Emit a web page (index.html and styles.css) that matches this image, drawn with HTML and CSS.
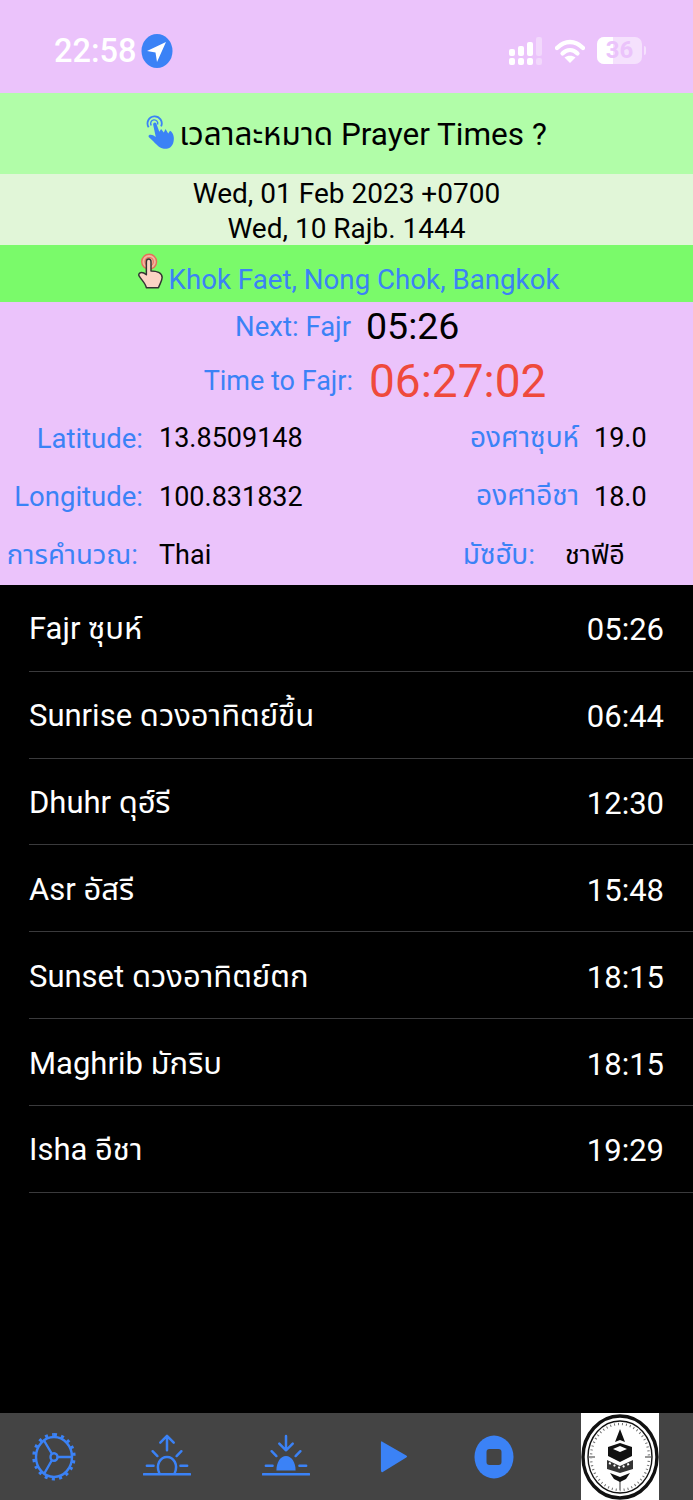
FILE: index.html
```html
<!DOCTYPE html>
<html lang="en">
<head>
    <meta charset="UTF-8">
    <meta name="viewport" content="width=device-width, initial-scale=1.0">
    <title>Prayer Times</title>
    <link rel="stylesheet" href="styles.css">
</head>
<body>
    <div class="status-bar">
        <div class="status-left">
            <span class="clock">22:58</span>
            <svg class="location-icon" width="32" height="34" viewBox="0 0 32 34">
                <ellipse cx="16" cy="17" rx="15.5" ry="17" fill="#3b82f6"/>
                <path d="M25 8 L6 17 L14.5 18.5 L16 28 Z" fill="#fff"/>
            </svg>
        </div>
        <div class="status-right">
            <svg width="36" height="30" viewBox="0 0 36 30">
                <g fill="#fff">
                    <rect x="1" y="13" width="6" height="7" rx="2"/>
                    <rect x="10" y="10" width="6" height="10" rx="2"/>
                    <rect x="19" y="6" width="6" height="14" rx="2"/>
                    <rect x="1" y="22" width="6" height="7" rx="2"/>
                    <rect x="10" y="22" width="6" height="7" rx="2"/>
                    <rect x="19" y="22" width="6" height="7" rx="2"/>
                </g>
                <g fill="#fff" opacity="0.35">
                    <rect x="28" y="1" width="6" height="19" rx="2"/>
                    <rect x="28" y="22" width="6" height="7" rx="2"/>
                </g>
            </svg>
            <svg class="wifi" width="30" height="26" viewBox="0 0 30 26">
                <path d="M2 10 C10 2 20 2 28 10" fill="none" stroke="#fff" stroke-width="4.4" stroke-linecap="round"/>
                <path d="M7.5 15.5 C12 11 18 11 22.5 15.5" fill="none" stroke="#fff" stroke-width="4.2" stroke-linecap="round"/>
                <path d="M15 25 L9.5 19.5 C12.5 17 17.5 17 20.5 19.5 Z" fill="#fff"/>
            </svg>
            <div class="battery">
                <div class="battery-fill"></div>
                <span class="battery-num">36</span>
            </div>
            <div class="battery-cap"></div>
        </div>
    </div>

    <div class="title-bar">
        <svg width="32" height="37" viewBox="0 0 36 38">
            <path d="M3 12 A8 8 0 1 1 17 11" fill="none" stroke="#3b82f6" stroke-width="2"/>
            <path d="M6 10 A4 4 0 1 1 13 9" fill="none" stroke="#3b82f6" stroke-width="1.6"/>
            <path d="M8 9 C8 6 12 6 12 9 L15 17 L17 14 L20 18 L22 14 L25 19 L27 16 C31 18 32 24 31 28 C30 35 24 37 19 36 C14 35 11 30 3 23 C2 20 6 20 8 21 L11 23 Z" fill="#3b82f6"/>
        </svg>
        <span>เวลาละหมาด Prayer Times ?</span>
    </div>

    <div class="date-bar">
        <div>Wed, 01 Feb 2023 +0700</div>
        <div>Wed, 10 Rajb. 1444</div>
    </div>

    <div class="place-bar">
        <svg width="26" height="40" viewBox="0 0 28 40">
            <circle cx="12" cy="10" r="8" fill="#f2b5a0" stroke="#e5705a" stroke-width="1.5"/>
            <circle cx="12" cy="10" r="4.5" fill="none" stroke="#e5705a" stroke-width="1.2"/>
            <path d="M9 10 C9 6 14 6 14 10 L14 20 C20 20 26 22 26 27 C26 30 24 33 22 38 L9 38 C8 33 4 30 1 25 C0 22 4 20 9 24 Z" fill="#fad3c4" stroke="#333" stroke-width="1.6" stroke-linejoin="round"/>
        </svg>
        <span>Khok Faet, Nong Chok, Bangkok</span>
    </div>

    <div class="info">
        <div class="next-row">
            <span class="label next-label">Next: Fajr</span>
            <span class="next-time">05:26</span>
        </div>
        <div class="next-row countdown-row">
            <span class="label next-label">Time to Fajr:</span>
            <span class="countdown">06:27:02</span>
        </div>
        <div class="info-row">
            <span class="label col-label">Latitude:</span>
            <span class="col-value">13.8509148</span>
            <span class="label col-label2">องศาซุบห์</span>
            <span class="col-value2">19.0</span>
        </div>
        <div class="info-row">
            <span class="label col-label">Longitude:</span>
            <span class="col-value">100.831832</span>
            <span class="label col-label2">องศาอีชา</span>
            <span class="col-value2">18.0</span>
        </div>
        <div class="info-row">
            <span class="label col-label method">การคำนวณ:</span>
            <span class="col-value">Thai</span>
            <span class="label col-label2 madhab">มัซฮับ:</span>
            <span class="col-value2 madhab-value">ชาฟีอี</span>
        </div>
    </div>

    <div class="times">
        <div class="time-row"><span>Fajr ซุบห์</span><span>05:26</span></div>
        <div class="time-row"><span>Sunrise ดวงอาทิตย์ขึ้น</span><span>06:44</span></div>
        <div class="time-row"><span>Dhuhr ดุฮ์รี</span><span>12:30</span></div>
        <div class="time-row"><span>Asr อัสรี</span><span>15:48</span></div>
        <div class="time-row"><span>Sunset ดวงอาทิตย์ตก</span><span>18:15</span></div>
        <div class="time-row"><span>Maghrib มักริบ</span><span>18:15</span></div>
        <div class="time-row"><span>Isha อีชา</span><span>19:29</span></div>
    </div>

    <div class="tab-bar">
        <svg class="tab" width="44" height="48" viewBox="0 0 44 48">
            <g fill="none" stroke="#3b82f6" stroke-width="2.4">
                <ellipse cx="22" cy="24" rx="18" ry="20"/>
                <ellipse cx="22" cy="24" rx="3.5" ry="3.8"/>
                <path d="M25.5 24 H40 M20 21 L12 7.5 M20 27 L12 41"/>
                <path stroke-width="3.4" stroke-dasharray="3 4.2" d="M22 1.8 A20 22 0 1 1 21.9 1.8"/>
            </g>
        </svg>
        <svg class="tab" width="48" height="48" viewBox="0 0 50 48">
            <g fill="none" stroke="#3b82f6" stroke-width="2.6" stroke-linecap="round" stroke-linejoin="round">
                <path d="M25 17 V2 M18 9 L25 2 L32 9"/>
                <path d="M10 18 L15 23 M40 18 L35 23 M4 33 H11 M39 33 H46"/>
                <path d="M17 41 C13 32 18 24 25 24 C32 24 37 32 33 41"/>
                <path d="M1 42 H49"/>
            </g>
        </svg>
        <svg class="tab" width="48" height="48" viewBox="0 0 50 48">
            <g fill="none" stroke="#3b82f6" stroke-width="2.6" stroke-linecap="round" stroke-linejoin="round">
                <path d="M25 2 V17 M18 10 L25 17 L32 10"/>
                <path d="M10 18 L15 23 M40 18 L35 23 M4 33 H11 M39 33 H46"/>
                <path d="M1 42 H49"/>
            </g>
            <path d="M15 38 C15 30 19 23 25 23 C31 23 35 30 35 38 Z" fill="#3b82f6"/>
        </svg>
        <svg class="tab" width="29" height="37" viewBox="0 0 32 38">
            <path d="M3 3 L29 18 Q31 19 29 20 L3 36 Q1 37 1 34 V4 Q1 1 3 3 Z" fill="#3b82f6"/>
        </svg>
        <svg class="tab" width="40" height="44" viewBox="0 0 40 44">
            <ellipse cx="20" cy="22" rx="19.5" ry="21.5" fill="#3b82f6"/>
            <rect x="12.5" y="14" width="15" height="16" rx="3" fill="#444"/>
        </svg>
        <div class="logo">
            <svg width="78" height="87" viewBox="0 0 78 87">
                <g fill="none" stroke="#111">
                    <ellipse cx="39" cy="44" rx="37" ry="41" stroke-width="3.4"/>
                    <ellipse cx="39" cy="44" rx="32" ry="36" stroke-width="1.4"/>
                    <ellipse cx="39" cy="44" rx="29" ry="33" stroke-width="2.4" stroke-dasharray="1 3" stroke-opacity="0.6"/>
                    <path d="M39 66 V77 M8 44 H14 M64 44 H70" stroke="#999" stroke-width="2"/>
                </g>
                <path d="M39 16 L44 29 L39 27 L34 29 Z" fill="#111"/>
                <path d="M27 34 L39 30 L51 34 L51 43 L39 49 L27 43 Z" fill="#111"/>
                <path d="M39 33 L46 36 L39 39 L32 36 Z" fill="#fff"/>
                <path d="M26 47 L39 53 L52 47 V56 L39 60 L26 56 Z" fill="#111" opacity="0.85"/>
                <path d="M28 50 L39 55 L50 50" fill="none" stroke="#fff" stroke-width="2" stroke-dasharray="2 3"/>
                <path d="M29 60 L39 64 L49 60 L45 66 L39 69 L33 66 Z" fill="#111"/>
            </svg>
        </div>
    </div>
</body>
</html>
```

FILE: styles.css
```css
body {
    font-family: Roboto, "Noto Sans", "Noto Sans Thai", "Liberation Sans", sans-serif;
    margin: 0;
    padding: 0;
    width: 693px;
    height: 1500px;
    display: flex;
    flex-direction: column;
    background-color: #000;
    overflow: hidden;
}
.status-bar {
    height: 93px;
    background-color: #ebc3fb;
    display: flex;
    justify-content: space-between;
    align-items: center;
    padding: 8px 47px 0 54px;
    box-sizing: border-box;
}
.status-left, .status-right {
    display: flex;
    align-items: center;
}
.clock {
    color: #fff;
    font-size: 32.5px;
    font-weight: 500;
    margin-right: 5px;
}
.wifi {
    margin-left: 11px;
    margin-right: 12px;
}
.battery {
    position: relative;
    width: 45px;
    height: 27px;
    border-radius: 7px;
    background-color: rgba(255, 255, 255, 0.5);
    overflow: hidden;
    text-align: center;
}
.battery-fill {
    width: 16px;
    height: 27px;
    background-color: #fff;
}
.battery-num {
    position: absolute;
    left: 0;
    right: 0;
    top: 0;
    line-height: 27px;
    font-size: 24px;
    font-weight: 700;
    color: #ebc3fb;
}
.battery-cap {
    width: 2px;
    height: 9px;
    margin-left: 2px;
    border-radius: 0 2px 2px 0;
    background-color: rgba(255, 255, 255, 0.5);
}
.title-bar {
    height: 81px;
    background-color: #b1fda8;
    display: flex;
    justify-content: center;
    align-items: center;
    font-size: 31.5px;
    color: #000;
}
.title-bar span {
    padding-top: 4px;
}
.title-bar svg {
    margin-right: 1px;
}
.date-bar {
    height: 71px;
    box-sizing: border-box;
    padding-top: 2px;
    background-color: #e1f6d8;
    text-align: center;
    font-size: 28px;
    line-height: 35px;
    color: #000;
}
.place-bar {
    height: 57px;
    box-sizing: border-box;
    padding-left: 4px;
    background-color: #7afa6a;
    display: flex;
    justify-content: center;
    align-items: flex-end;
    font-size: 27.7px;
    color: #3b82f6;
}
.place-bar span {
    line-height: 44px;
}
.place-bar svg {
    margin-bottom: 11px;
    margin-right: 5px;
}
.info {
    height: 283px;
    background-color: #ebc3fb;
    font-size: 27.5px;
    color: #000;
}
.label {
    color: #3b82f6;
}
.next-row {
    height: 48px;
    display: flex;
    align-items: center;
}
.next-label {
    width: 351px;
    text-align: right;
}
.next-time {
    margin-left: 15px;
    font-size: 37.5px;
}
.countdown-row {
    height: 59px;
}
.countdown-row .next-label {
    width: 353px;
    font-size: 27px;
    padding-top: 2px;
}
.countdown {
    margin-left: 16px;
    padding-top: 2px;
    font-size: 46px;
    color: #ef4a3c;
}
.info-row {
    height: 58.5px;
    display: flex;
    align-items: center;
}
.col-label {
    width: 143px;
    text-align: right;
    white-space: nowrap;
}
.method {
    width: 138px;
    margin-right: 5px;
}
.col-value {
    width: 220px;
    margin-left: 16px;
    font-size: 27px;
}
.col-label2 {
    width: 200px;
    text-align: right;
    font-size: 28px;
}
.col-value2 {
    margin-left: 15px;
    font-size: 27px;
}
.madhab {
    width: 156px;
}
.madhab-value {
    margin-left: 30px;
}
.times {
    flex: 1;
    background-color: #000;
    color: #fff;
    font-size: 31px;
}
.time-row {
    height: 86.83px;
    box-sizing: border-box;
    margin-left: 29px;
    padding: 4px 29px 0 0;
    display: flex;
    justify-content: space-between;
    align-items: center;
    border-bottom: 1px solid #3a3a3c;
}
.tab-bar {
    height: 87px;
    background-color: #444;
    display: flex;
    align-items: center;
}
.tab {
    flex-shrink: 0;
}
.tab:nth-child(1) { margin-left: 32px; }
.tab:nth-child(2) { margin-left: 67px; }
.tab:nth-child(3) { margin-left: 71px; }
.tab:nth-child(4) { margin-left: 70px; }
.tab:nth-child(5) { margin-left: 65px; }
.logo {
    width: 78px;
    height: 87px;
    margin-left: 67px;
    background-color: #fff;
}
```
